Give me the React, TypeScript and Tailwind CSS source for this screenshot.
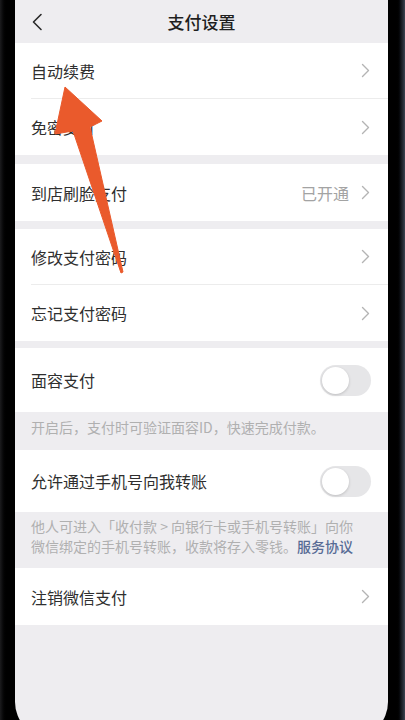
import React from "react";

const Chevron = () => (
  <svg width="9" height="15" viewBox="0 0 9 15" fill="none">
    <path d="M1.5 1.5 L7.5 7.5 L1.5 13.5" stroke="#b4b4b4" strokeWidth="1.4" strokeLinecap="round" strokeLinejoin="round" />
  </svg>
);

const Toggle = () => (
  <div className="w-[51px] h-[31px] rounded-full bg-[#e6e6e8] p-[2px] flex items-center">
    <div className="w-[27px] h-[27px] rounded-full bg-white shadow-[0_1px_3px_rgba(0,0,0,0.18)]" />
  </div>
);

const Row = ({ label, right, sep, h = "h-[56px]" }: { label: string; right?: React.ReactNode; sep?: boolean; h?: string }) => (
  <div className={`bg-white ${h} flex items-stretch pl-4`}>
    <div className={`flex-1 flex items-center pr-[18px] ${sep ? "border-b border-[#ececec]" : ""}`}>
      <span className="flex-1 text-[16px] text-[#2f2f2f]">{label}</span>
      {right ?? <Chevron />}
    </div>
  </div>
);

export default function App() {
  return (
    <div
      className="relative w-[405px] h-[720px] overflow-hidden bg-black flex"
      style={{ fontFamily: '"Noto Sans CJK SC", "Noto Sans", sans-serif' }}
    >
      <div className="w-[15px] shrink-0 bg-gradient-to-r from-[#1c1c1e] via-black to-black" />
      <div className="w-[373px] h-[738px] shrink-0 bg-[#eeedf0] rounded-b-[36px] overflow-hidden flex flex-col">
        {/* header */}
        <div className="h-[43px] shrink-0 grid grid-cols-[1fr_auto_1fr] items-center px-4">
          <div className="flex items-center">
            <svg width="12" height="18" viewBox="0 0 12 18" fill="none">
              <path d="M10 1.5 L2.5 9 L10 16.5" stroke="#2a2a2a" strokeWidth="1.6" strokeLinecap="round" strokeLinejoin="round" />
            </svg>
          </div>
          <span className="text-[17px] font-medium text-[#1f1f1f]">支付设置</span>
          <div />
        </div>

        <Row label="自动续费" sep />
        <Row label="免密支付" />

        <div className="h-[9px] shrink-0" />
        <Row
          label="到店刷脸支付"
          h="h-[57px]"
          right={
            <div className="flex items-center gap-3">
              <span className="text-[16px] text-[#a3a3a3]">已开通</span>
              <Chevron />
            </div>
          }
        />

        <div className="h-[8px] shrink-0" />
        <Row label="修改支付密码" sep />
        <Row label="忘记支付密码" />

        <div className="h-[7px] shrink-0" />
        <div className="bg-white h-[64px] flex items-center pl-4 pr-[17px]">
          <span className="flex-1 text-[16px] text-[#2f2f2f]">面容支付</span>
          <Toggle />
        </div>
        <div className="h-[38px] pt-[5px] px-4 text-[14px] leading-[20px] text-[#b0b0b0] whitespace-nowrap">
          开启后，支付时可验证面容ID，快速完成付款。
        </div>

        <div className="bg-white h-[62px] flex items-center pl-4 pr-[17px]">
          <span className="flex-1 text-[16px] text-[#2f2f2f]">允许通过手机号向我转账</span>
          <Toggle />
        </div>
        <div className="h-[56px] pt-[4px] px-4 text-[14px] leading-[20px] text-[#b0b0b0] flex flex-col">
          <span className="whitespace-nowrap">他人可进入「收付款 &gt; 向银行卡或手机号转账」向你</span>
          <span className="whitespace-nowrap">
            微信绑定的手机号转账，收款将存入零钱。<span className="text-[#576b95] font-medium">服务协议</span>
          </span>
        </div>

        <Row label="注销微信支付" h="h-[57px]" />
        <div className="flex-1" />
      </div>
      <div className="flex-1 bg-gradient-to-r from-black via-black to-[#3b4350]" />

      {/* annotation arrow */}
      <svg className="absolute left-0 top-0 pointer-events-none" width="405" height="720" viewBox="0 0 405 720">
        <polygon
          points="65,87 102,121 90,127 123,272 121,273 73,131 55,134"
          fill="#ea5a2c"
          stroke="#ea5a2c"
          strokeWidth="1"
          strokeLinejoin="round"
        />
      </svg>
    </div>
  );
}
